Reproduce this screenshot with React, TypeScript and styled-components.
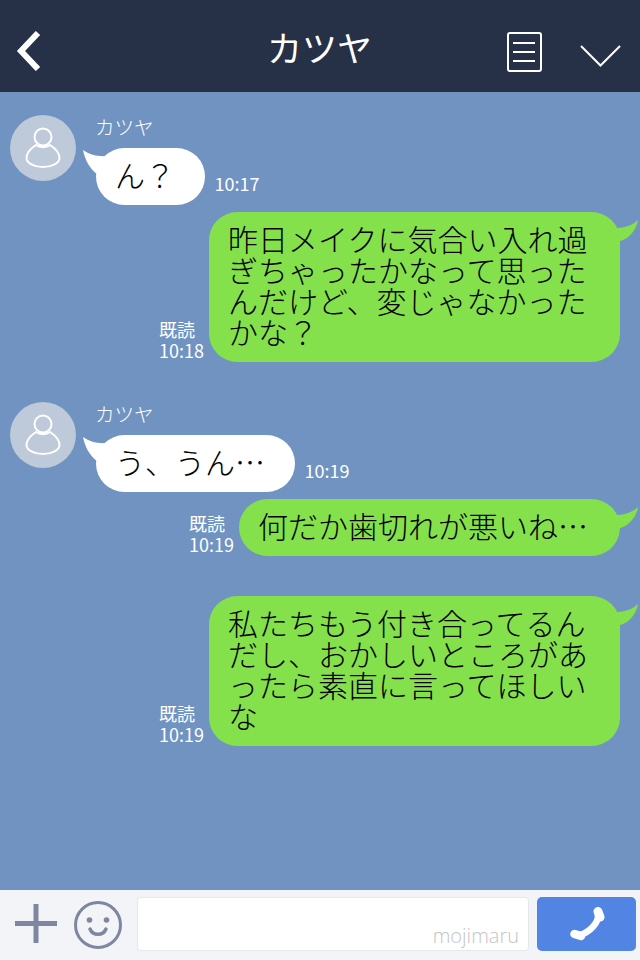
import React from "react";
import styled, { createGlobalStyle } from "styled-components";

const Global = createGlobalStyle`
  html, body { margin: 0; padding: 0; background: #7093c1; }
  #root { width: 640px; height: 960px; overflow: hidden; }
`;
const FONT = `"Noto Sans CJK JP", "Noto Sans", sans-serif`;

const Screen = styled.div`
  width: 640px; height: 960px; display: flex; flex-direction: column;
  background: #7093c1; font-family: ${FONT};
`;
const Header = styled.header`
  height: 92px; background: #263046; display: grid; grid-template-columns: 1fr auto 1fr;
  flex: none; color: #fff;
`;
const Title = styled.h1`
  margin: 20px 1px 0 0; font-size: 35px; line-height: 54px; font-weight: 400; color: #fff;
`;
const BackSlot = styled.div`padding: 31px 0 0 16px; display: flex;`;
const RightIcons = styled.div`
  display: flex; justify-content: flex-end; align-items: flex-start; padding: 32px 19px 0 0;
`;
const ListIcon = styled.svg`flex: none;`;
const DownIcon = styled.svg`flex: none; margin: 13px 0 0 38px;`;
const Chat = styled.main`
  flex: 1; display: flex; flex-direction: column; padding-top: 23px; min-height: 0;
`;
const InRow = styled.div<{ $mt: number }>`
  display: flex; margin-top: ${p => p.$mt}px; padding-left: 10px;
`;
const Avatar = styled.div`
  width: 66px; height: 66px; border-radius: 50%; background: #bec9d9; flex: none;
  display: flex; align-items: center; justify-content: center;
`;
const InBody = styled.div`
  margin-left: 20px; display: flex; flex-direction: column; align-items: flex-start;
`;
const Name = styled.div`
  font-size: 19.500px; line-height: 24px; color: #fff; height: 33px; font-weight: 300; margin-left: -1px;
`;
const BubbleLine = styled.div`display: flex; align-items: flex-end;`;
const Bubble = styled.div<{ $green?: boolean }>`
  position: relative; box-sizing: border-box; min-height: 57px;
  background: ${p => (p.$green ? "#84e14b" : "#fff")};
  border-radius: 28.500px;
  padding: 11px ${p => (p.$green ? 32 : 30)}px 15px 19px;
  font-size: 30px; line-height: 31px; color: #000; font-weight: 300;
`;
const WideText = styled.div`width: 360px;`;
const Tail = styled.svg<{ $side: "l" | "r" }>`
  position: absolute;
  ${p => (p.$side === "l" ? "left: -13px; top: 2px;" : "right: -18px; top: 8px;")}
`;
const InTime = styled.div`
  font-size: 18px; line-height: 22px; color: #fff; margin-left: 9.500px; margin-bottom: 11px; font-weight: 400;
`;
const OutRow = styled.div<{ $mt: number }>`
  display: flex; justify-content: flex-end; align-items: flex-end;
  margin-top: ${p => p.$mt}px; padding-right: 20px;
`;
const Meta = styled.div`
  font-size: 18px; line-height: 21px; color: #fff; margin-right: 5px; margin-bottom: 1px; font-weight: 400;
`;
const Footer = styled.footer`
  height: 70px; flex: none; background: #f3f4f7; display: flex; align-items: flex-start;
  padding-top: 7px; box-sizing: border-box;
`;
const Plus = styled.svg`margin: 7px 0 0 15px; flex: none;`;
const Smile = styled.svg`margin: 4px 0 0 17px; flex: none;`;
const Input = styled.div`
  box-sizing: border-box; width: 392px; height: 54px; margin-left: 15px; background: #fff;
  border: 1px solid #e6e7ea; border-radius: 4px; display: flex; justify-content: flex-end;
  align-items: flex-end; padding: 0 9px 1px 0; flex: none;
`;
const Mark = styled.span`
  font-family: "Open Sans", "Noto Sans", sans-serif; font-size: 20px; font-weight: 300;
  line-height: 26px; color: #c4c4c8;
`;
const Call = styled.div`
  width: 99px; height: 54px; margin-left: 8px; background: #5284e4; border-radius: 5px;
  display: flex; align-items: center; justify-content: center; flex: none;
`;

const InTail = () => (
  <Tail $side="l" width="26" height="30" viewBox="0 0 26 30">
    <path d="M0 0C6 4 13 7 26 6L14 24C7 19 2 10 0 0Z" fill="#fff" />
  </Tail>
);
const OutTail = () => (
  <Tail $side="r" width="30" height="30" viewBox="0 0 30 30">
    <path d="M30 0C24 6 14 9 0 8L6 22C18 22 28 12 30 0Z" fill="#84e14b" />
  </Tail>
);
const Person = () => (
  <svg width="36" height="42" viewBox="0 0 36 42" fill="none" stroke="#fff" strokeWidth="2">
    <circle cx="18" cy="10" r="8.500" />
    <path d="M11 18C5 22 1.500 27 1.500 31C1.500 36 9 40 18 40C27 40 34.500 36 34.500 31C34.500 27 31 22 25 18C21 21 15 21 11 18Z" />
  </svg>
);

const Incoming = ({ mt, text, time }: { mt: number; text: string; time: string }) => (
  <InRow $mt={mt}>
    <Avatar><Person /></Avatar>
    <InBody>
      <Name>カツヤ</Name>
      <BubbleLine>
        <Bubble><InTail />{text}</Bubble>
        <InTime>{time}</InTime>
      </BubbleLine>
    </InBody>
  </InRow>
);
const Outgoing = ({ mt, text, time, wide }: { mt: number; text: string; time: string; wide?: boolean }) => (
  <OutRow $mt={mt}>
    <Meta>既読<br />{time}</Meta>
    <Bubble $green>
      <OutTail />
      {wide ? <WideText>{text}</WideText> : text}
    </Bubble>
  </OutRow>
);

export default function App() {
  return (
    <Screen>
      <Global />
      <Header>
        <BackSlot>
          <svg width="25" height="40" viewBox="0 0 25 40" fill="none" stroke="#fff" strokeWidth="6">
            <path d="M22 2L5 20L22 38" />
          </svg>
        </BackSlot>
        <Title>カツヤ</Title>
        <RightIcons>
          <ListIcon width="35" height="40" viewBox="0 0 35 40" fill="none" stroke="#fff">
            <rect x="1" y="1" width="33" height="38" rx="2" strokeWidth="2" />
            <path d="M6 11H28M6 20H28M6 29H28" strokeWidth="2" />
          </ListIcon>
          <DownIcon width="41" height="22" viewBox="0 0 41 22" fill="none" stroke="#fff" strokeWidth="2">
            <path d="M1 1L20.500 20.500L40 1" />
          </DownIcon>
        </RightIcons>
      </Header>
      <Chat>
        <Incoming mt={0} text="ん？" time="10:17" />
        <Outgoing mt={7} wide text="昨日メイクに気合い入れ過ぎちゃったかなって思ったんだけど、変じゃなかったかな？" time="10:18" />
        <Incoming mt={40} text="う、うん…" time="10:19" />
        <Outgoing mt={7} text="何だか歯切れが悪いね…" time="10:19" />
        <Outgoing mt={40} wide text="私たちもう付き合ってるんだし、おかしいところがあったら素直に言ってほしいな" time="10:19" />
      </Chat>
      <Footer>
        <Plus width="42" height="39" viewBox="0 0 42 39" fill="none" stroke="#7e879f" strokeWidth="5">
          <path d="M0 19.500H42M21 0V39" />
        </Plus>
        <Smile width="48" height="48" viewBox="0 0 48 48" fill="none" stroke="#7e879f">
          <circle cx="24" cy="24" r="22.500" strokeWidth="3" />
          <circle cx="15.500" cy="19" r="2.800" fill="#7e879f" stroke="none" />
          <circle cx="32.500" cy="19" r="2.800" fill="#7e879f" stroke="none" />
          <path d="M16 28C19 35 29 35 32 28" strokeWidth="3.500" strokeLinecap="round" />
        </Smile>
        <Input><Mark>mojimaru</Mark></Input>
        <Call>
          <svg width="36" height="34" viewBox="0 0 36 34" fill="none" stroke="#fff" strokeLinecap="round">
            <path d="M29 9C29 16 21 25 11 28" strokeWidth="6.500" />
            <path d="M29 4.500L31 10" strokeWidth="9" />
            <path d="M5.500 27L12 29" strokeWidth="8.500" />
          </svg>
        </Call>
      </Footer>
    </Screen>
  );
}
